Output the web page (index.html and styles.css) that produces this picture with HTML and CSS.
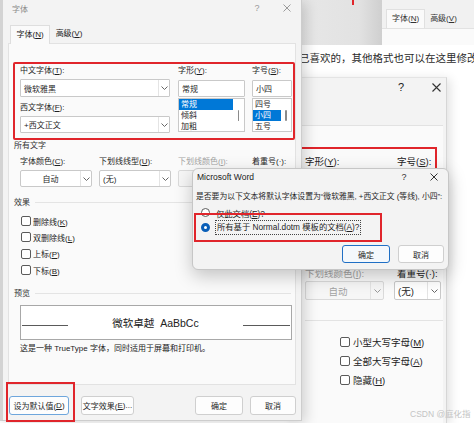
FILE: index.html
```html
<!DOCTYPE html>
<html lang="zh-CN">
<head>
<meta charset="utf-8">
<title>字体</title>
<link rel="stylesheet" href="styles.css">
</head>
<body>
<div class="page">

  <div class="bg">
    <div class="bg-top">
      <div class="bg-gray"><span class="redmark"></span></div>
      <div class="bg-win">
        <div class="bg-tabs"><span class="bg-tab on">字体(<u>N</u>)</span><span class="bg-tab">高级(<u>V</u>)</span></div>
        <div class="bg-panel"></div>
      </div>
    </div>
    <p class="bg-text">己喜欢的，其他格式也可以在这里修改</p>
    <div class="rdlg">
      <div class="r-title">
        <span class="r-btn">?</span>
        <span class="r-btn"><svg width="9" height="9" viewBox="0 0 9 9"><path d="M.5 .5 8.5 8.5M8.5 .5 .5 8.5" stroke="#333" stroke-width="1.1" fill="none"/></svg></span>
      </div>
      <div class="r-tabs"></div>
      <div class="r-panel">
        <div class="r-red">
          <span class="r-col1">字形(<u>Y</u>):</span><span>字号(<u>S</u>):</span>
        </div>
        <div class="r-labels"><span class="r-col1 dim">下划线颜色(<u>I</u>):</span><span class="r-col2">着重号(·):</span></div>
        <div class="r-dds">
          <div class="dd r-dd1 disabled"><span class="dd-val center">自动</span><span class="dd-btn"><svg width="7" height="4" viewBox="0 0 7 4"><path d="M.5 .5 3.5 3.5 6.5 .5" fill="none" stroke="#999"/></svg></span></div>
          <div class="dd r-dd2"><span class="dd-val">(无)</span><span class="dd-btn"><svg width="7" height="4" viewBox="0 0 7 4"><path d="M.5 .5 3.5 3.5 6.5 .5" fill="none" stroke="#666"/></svg></span></div>
        </div>
        <div class="r-sep"></div>
        <div class="r-checks">
          <div class="r-check"><span class="cb"></span><span>小型大写字母(<u>M</u>)</span></div>
          <div class="r-check"><span class="cb"></span><span>全部大写字母(<u>A</u>)</span></div>
          <div class="r-check"><span class="cb"></span><span>隐藏(<u>H</u>)</span></div>
        </div>
      </div>
    </div>
  </div>

  <div class="fontdlg">
    <div class="f-title">
      <span class="f-name">字体</span>
      <span class="f-btn">?</span>
      <span class="f-btn"><svg width="8" height="8" viewBox="0 0 8 8"><path d="M.5 .5 7.5 7.5M7.5 .5 .5 7.5" stroke="#9a9a9a" stroke-width="1" fill="none"/></svg></span>
    </div>
    <div class="f-tabs">
      <span class="f-tab on">字体(<u>N</u>)</span>
      <span class="f-tab">高级(<u>V</u>)</span>
    </div>
    <div class="f-panel">
      <div class="redbox1">
        <div class="col c1">
          <div class="lab">中文字体(<u>T</u>):</div>
          <div class="inp h18"><span class="dd-val">微软雅黑</span><span class="dd-btn"><svg width="7" height="4" viewBox="0 0 7 4"><path d="M.5 .5 3.5 3.5 6.5 .5" fill="none" stroke="#666"/></svg></span></div>
          <div class="lab mt5">西文字体(<u>F</u>):</div>
          <div class="inp h17"><span class="dd-val">+西文正文</span><span class="dd-btn"><svg width="7" height="4" viewBox="0 0 7 4"><path d="M.5 .5 3.5 3.5 6.5 .5" fill="none" stroke="#666"/></svg></span></div>
        </div>
        <div class="col c2">
          <div class="lab">字形(<u>Y</u>):</div>
          <div class="inp h17 mt3"><span class="dd-val">常规</span></div>
          <div class="list">
            <div class="items">
              <div class="item sel">常规</div>
              <div class="item">倾斜</div>
              <div class="item">加粗</div>
            </div>
            <div class="sbar"><span class="thumb"></span></div>
          </div>
        </div>
        <div class="col c3">
          <div class="lab">字号(<u>S</u>):</div>
          <div class="inp h17 mt3"><span class="dd-val">小四</span></div>
          <div class="list">
            <div class="items">
              <div class="item">四号</div>
              <div class="item sel">小四</div>
              <div class="item">五号</div>
            </div>
            <div class="sbar"><span class="thumb"></span></div>
          </div>
        </div>
      </div>

      <div class="sec">所有文字</div>
      <div class="row2">
        <div class="col w72">
          <div class="lab">字体颜色(<u>C</u>):</div>
          <div class="dd"><span class="dd-val center">自动</span><span class="dd-btn"><svg width="7" height="4" viewBox="0 0 7 4"><path d="M.5 .5 3.5 3.5 6.5 .5" fill="none" stroke="#666"/></svg></span></div>
        </div>
        <div class="col w72">
          <div class="lab">下划线线型(<u>U</u>):</div>
          <div class="dd"><span class="dd-val">(无)</span><span class="dd-btn"><svg width="7" height="4" viewBox="0 0 7 4"><path d="M.5 .5 3.5 3.5 6.5 .5" fill="none" stroke="#666"/></svg></span></div>
        </div>
        <div class="col w67">
          <div class="lab dim">下划线颜色(<u>I</u>):</div>
          <div class="dd disabled"></div>
        </div>
        <div class="col w40">
          <div class="lab">着重号(·):</div>
          <div class="dd"></div>
        </div>
      </div>

      <div class="sec line">效果<span class="rule"></span></div>
      <div class="checks">
        <div class="check"><span class="cb"></span><span>删除线(<u>K</u>)</span></div>
        <div class="check"><span class="cb"></span><span>双删除线(<u>L</u>)</span></div>
        <div class="check"><span class="cb"></span><span>上标(<u>P</u>)</span></div>
        <div class="check"><span class="cb"></span><span>下标(<u>B</u>)</span></div>
      </div>

      <div class="sec line mt-prev">预览<span class="rule"></span></div>
      <div class="preview">
        <span class="pline pl"></span>
        <span class="ptext">微软卓越&nbsp; AaBbCc</span>
        <span class="pline pr"></span>
      </div>
      <p class="desc">这是一种 TrueType 字体，同时适用于屏幕和打印机。</p>
    </div>
    <div class="f-btnrow">
      <span class="btn focus w60">设为默认值(<u>D</u>)</span>
      <span class="btn w53">文字效果(<u>E</u>)...</span>
      <span class="btn w48 push">确定</span>
      <span class="btn w46">取消</span>
    </div>
    <div class="red-def"></div>
  </div>

  <div class="msgbox">
    <div class="m-title">
      <span class="m-name">Microsoft Word</span>
      <span class="m-btn">?</span>
      <span class="m-btn"><svg width="8" height="8" viewBox="0 0 8 8"><path d="M.5 .5 7.5 7.5M7.5 .5 .5 7.5" stroke="#333" stroke-width="1" fill="none"/></svg></span>
    </div>
    <p class="m-text">是否要为以下文本将默认字体设置为“微软雅黑, +西文正文 (等线), 小四”:</p>
    <div class="m-radio r1"><span class="radio"></span><span>仅此文档(<u>E</u>)?</span></div>
    <div class="m-radio r2"><span class="radio on"></span><span class="focus-lab">所有基于 Normal.dotm 模板的文档(<u>A</u>)?</span></div>
    <div class="m-btns">
      <span class="btn mb-ok">确定</span>
      <span class="btn mb-cancel">取消</span>
    </div>
    <div class="m-red"></div>
  </div>

  <div class="wm">CSDN @庭化指</div>
</div>
</body>
</html>
```
FILE: styles.css
```css
* { box-sizing: border-box; margin: 0; padding: 0; }
html, body { width: 474px; height: 423px; overflow: hidden; }
body {
  font-family: "Liberation Sans", "Noto Sans CJK SC", sans-serif;
  color: #1f1f1f;
  background: #fff;
}
u { text-decoration: underline; text-underline-offset: 1px; text-decoration-thickness: 1px; }

.page { position: relative; width: 474px; height: 423px; overflow: hidden; background: #fff; }

/* ---------- background (right side) ---------- */
.bg {
  position: absolute; left: 290px; top: 0; width: 184px; height: 423px;
  display: flex; flex-direction: column;
}
.bg-top { height: 45px; display: flex; }
.bg-gray {
  width: 92px; padding-left: 62px;
  background: linear-gradient(to right, #e8e8e8, #e2e2e2 75%, #cfcfcf);
}
.redmark { display: block; width: 2px; height: 5px; background: #e0252b; }
.bg-win { flex: 1; background: #f1f1f1; padding-top: 9px; display: flex; flex-direction: column; }
.bg-tabs { height: 19px; display: flex; padding-left: 4px; font-size: 8px; }
.bg-tab { padding: 0 5px; line-height: 19px; color: #333; white-space: nowrap; }
.bg-tab.on { background: #fafafa; border: 1px solid #e0e0e0; border-bottom: none; line-height: 18px; }
.bg-panel { flex: 1; background: #fafafa; border-top: 1px solid #e2e2e2; }
.bg-text {
  margin-top: 6px; height: 14px; line-height: 14px; padding-left: 9px;
  font-size: 10.5px; color: #2b2b2b; white-space: nowrap; overflow: hidden;
}

.rdlg {
  margin-top: 12px; width: 157px; flex: 1;
  background: #f3f3f3; border-right: 1px solid #d6d6d6; border-top: 1px solid #e4e4e4;
  box-shadow: 3px 2px 10px rgba(0,0,0,.12);
  display: flex; flex-direction: column; font-size: 9.5px;
}
.r-title { height: 18px; display: flex; justify-content: flex-end; align-items: center; gap: 23px; padding-right: 4px; }
.r-btn { width: 12px; text-align: center; font-size: 11px; color: #222; display: flex; justify-content: center; }
.r-tabs { height: 29px; }
.r-panel { flex: 1; background: #fafafa; border-top: 1px solid #e2e2e2; margin-right: 3px; }
.r-red {
  margin-top: 21px; width: 147px; height: 95px;
  border: 2px solid #e0252b; display: flex; padding: 6px 0 0 13px; line-height: 14px; color: #222;
}
.r-col1 { width: 92px; white-space: nowrap; }
.r-labels { margin-top: 26px; height: 12px; line-height: 12px; display: flex; padding-left: 15px; white-space: nowrap; }
.r-labels .r-col1 { width: 89px; }
.r-col2 { padding-left: 3px; color: #222; }
.dim { color: #a3a3a3; }
.r-dds { margin-top: 1px; height: 19px; display: flex; gap: 10px; padding-left: 15px; }
.r-dd1 { width: 79px; }
.r-dd2 { width: 47px; }
.r-dds .dd { height: 19px; }
.r-dds .dd-btn { width: 13px; }
.r-sep { margin-top: 20px; height: 1px; margin-left: 15px; background: #e3e3e3; }
.r-checks { margin-top: 11px; padding-left: 50px; }
.r-check { height: 19px; display: flex; align-items: center; gap: 3px; color: #222; white-space: nowrap; }
.r-check .cb { width: 10px; height: 10px; }

/* ---------- common controls ---------- */
.dd, .inp {
  display: flex; align-items: center;
  height: 17px; border: 1px solid #c9c9c9; background: #fff; border-radius: 2px;
}
.dd-val { flex: 1; padding-left: 3px; white-space: nowrap; overflow: hidden; }
.dd-val.center { text-align: center; padding-left: 0; }
.dd-btn {
  width: 11px; height: 100%; border-left: 1px solid #e4e4e4;
  display: flex; align-items: center; justify-content: center;
}
.disabled { background: #f6f6f6; border-color: #dadada; color: #a3a3a3; }
.cb { width: 9px; height: 9px; border: 1px solid #5a5a5a; border-radius: 2px; background: #fff; flex: none; }

.btn {
  display: flex; align-items: center; justify-content: center;
  border: 1px solid #cfcfcf; border-radius: 3px; background: #fdfdfd; white-space: nowrap;
}

/* ---------- font dialog ---------- */
.fontdlg {
  position: absolute; left: 0; top: 0; width: 302px; height: 421px;
  background: #f3f3f3;
  border-left: 3px solid #d3d3d3; border-right: 1px solid #cdcdcd; border-bottom: 1px solid #cdcdcd;
  box-shadow: 4px 2px 12px rgba(0,0,0,.16);
  display: flex; flex-direction: column; font-size: 8px;
}
.f-title { height: 16px; display: flex; align-items: center; gap: 18px; padding: 0 8px 0 9px; }
.f-name { flex: 1; color: #8a8a8a; }
.f-btn { width: 12px; text-align: center; color: #9a9a9a; font-size: 9px; display: flex; justify-content: center; }
.f-tabs { margin-top: 9px; height: 18px; display: flex; padding-left: 7px; position: relative; z-index: 1; }
.f-tab { line-height: 17px; padding: 0 5.5px; color: #222; white-space: nowrap; }
.f-tab.on { background: #fafafa; border: 1px solid #dedede; border-bottom: none; height: 19px; }
.f-panel {
  margin: 0 5px; height: 342px;
  background: #fafafa; border: 1px solid #e2e2e2;
  display: flex; flex-direction: column;
}
.redbox1 {
  margin: 18px 0 0 4px; width: 282px; height: 78px; flex: none;
  border: 2px solid #e0252b; border-radius: 2px;
  display: flex; padding: 1px 0 0 5px;
}
.col { display: flex; flex-direction: column; }
.c1 { width: 150px; }
.c2 { width: 67px; margin-left: 8px; }
.c3 { width: 40px; margin-left: 7px; }
.lab { height: 12px; line-height: 12px; white-space: nowrap; color: #1f1f1f; }
.lab.dim { color: #a3a3a3; }
.inp { margin-top: 2px; border-radius: 1px; }
.h18 { height: 18px; }
.h17 { height: 17px; }
.mt3 { margin-top: 3px; }
.mt5 { margin-top: 5px; }
.list {
  margin-top: 1px; height: 34px; border: 1px solid #c9c9c9; background: #fff;
  display: flex; overflow: hidden;
}
.items { flex: 1; }
.item { height: 11px; line-height: 11px; padding-left: 2px; white-space: nowrap; }
.item.sel { background: #0078d7; color: #fff; }
.c2 .sbar { width: 11px; }
.c3 .sbar { width: 10px; }
.sbar { display: flex; justify-content: center; padding-top: 11px; }
.thumb { display: block; width: 1.5px; height: 11px; background: #8a8a8a; border-radius: 1px; }

.sec { margin-left: 5px; height: 11px; line-height: 11px; color: #333; display: flex; align-items: center; flex: none; }
.sec.line { margin-top: 10px; }
.sec .rule { flex: 1; height: 1px; background: #e4e4e4; margin: 0 4px 0 5px; }
.sec.mt-prev { margin-top: 9.2px; }

.row2 { margin-top: 5px; display: flex; gap: 7px; padding-left: 11px; flex: none; }
.row2 .lab { height: 11px; line-height: 11px; }
.row2 .dd { margin-top: 3px; }
.w72 { width: 72px; }
.w67 { width: 67px; }
.w40 { width: 40px; }

.checks { margin-top: 5px; padding-left: 12px; flex: none; }
.check { height: 16.33px; display: flex; align-items: center; gap: 2px; color: #222; white-space: nowrap; }
.check .cb { width: 10px; height: 10px; }

.preview {
  margin: 6.5px 0 0 11px; width: 272px; height: 35px; flex: none;
  border: 1px solid #a8a8a8; background: #fff;
  display: flex; align-items: center; padding: 0 1px;
}
.pline { display: block; height: 1px; background: #5a5a5a; margin-top: 6px; flex: none; }
.pl { width: 46px; }
.pr { width: 47px; }
.ptext { flex: 1; text-align: center; font-size: 10.5px; color: #222; white-space: nowrap; }
.desc { margin: 2.5px 0 0 11px; line-height: 11px; white-space: nowrap; color: #222; }

.f-btnrow { margin-top: 11px; height: 19px; display: flex; gap: 12px; padding: 0 5px 0 6px; }
.f-btnrow .btn { height: 19px; }
.btn.focus { border-color: #6ea6dc; }
.w60 { width: 60px; }
.w53 { width: 53px; }
.w48 { width: 48px; }
.w46 { width: 46px; margin-left: -5px; }
.push { margin-left: auto; }
.red-def {
  position: absolute; left: 3px; top: 382px; width: 69px; height: 40px;
  border: 2px solid #e0252b;
}

/* ---------- message box ---------- */
.msgbox {
  position: absolute; left: 192px; top: 168px; width: 257px; height: 102px;
  background: #f3f3f3; border: 1px solid #c6c6c6; border-radius: 6px;
  box-shadow: 0 6px 18px rgba(0,0,0,.22);
  display: flex; flex-direction: column; font-size: 8px;
}
.m-title { height: 16px; display: flex; align-items: center; gap: 18px; padding: 0 8px 0 4px; }
.m-name { flex: 1; font-size: 8.5px; color: #1a1a1a; }
.m-btn { width: 12px; text-align: center; font-size: 9px; color: #333; display: flex; justify-content: center; }
.m-text { margin-top: 5.5px; line-height: 11px; padding-left: 3px; white-space: nowrap; overflow: hidden; color: #1f1f1f; font-size: 7.8px; }
.m-radio { height: 13px; display: flex; align-items: center; gap: 6px; padding-left: 8px; font-size: 8.3px; color: #1f1f1f; white-space: nowrap; }
.m-radio.r1 { margin-top: 4.5px; }
.m-radio.r2 { margin-top: 1.5px; gap: 5px; }
.radio { width: 9px; height: 9px; border: 1px solid #5c5c5c; border-radius: 50%; background: #fff; flex: none; }
.radio.on { border: 3px solid #0a5fb8; }
.focus-lab { border: 1px dotted #444; padding: 0 1px; line-height: 13px; }
.m-btns { margin-top: 11.5px; height: 18px; display: flex; justify-content: flex-end; gap: 8px; padding-right: 4px; }
.m-btns .btn { height: 18px; }
.mb-ok { width: 48px; border-color: #1f6fc5; background: #f4f8fc; }
.mb-cancel { width: 46px; background: #fdfdfd; }
.m-red {
  position: absolute; left: 1px; top: 44px; width: 188px; height: 29px;
  border: 2px solid #e0252b;
}

.wm { position: absolute; left: 410px; top: 407px; font-size: 8.5px; color: #c4c4c4; white-space: nowrap; }
```
